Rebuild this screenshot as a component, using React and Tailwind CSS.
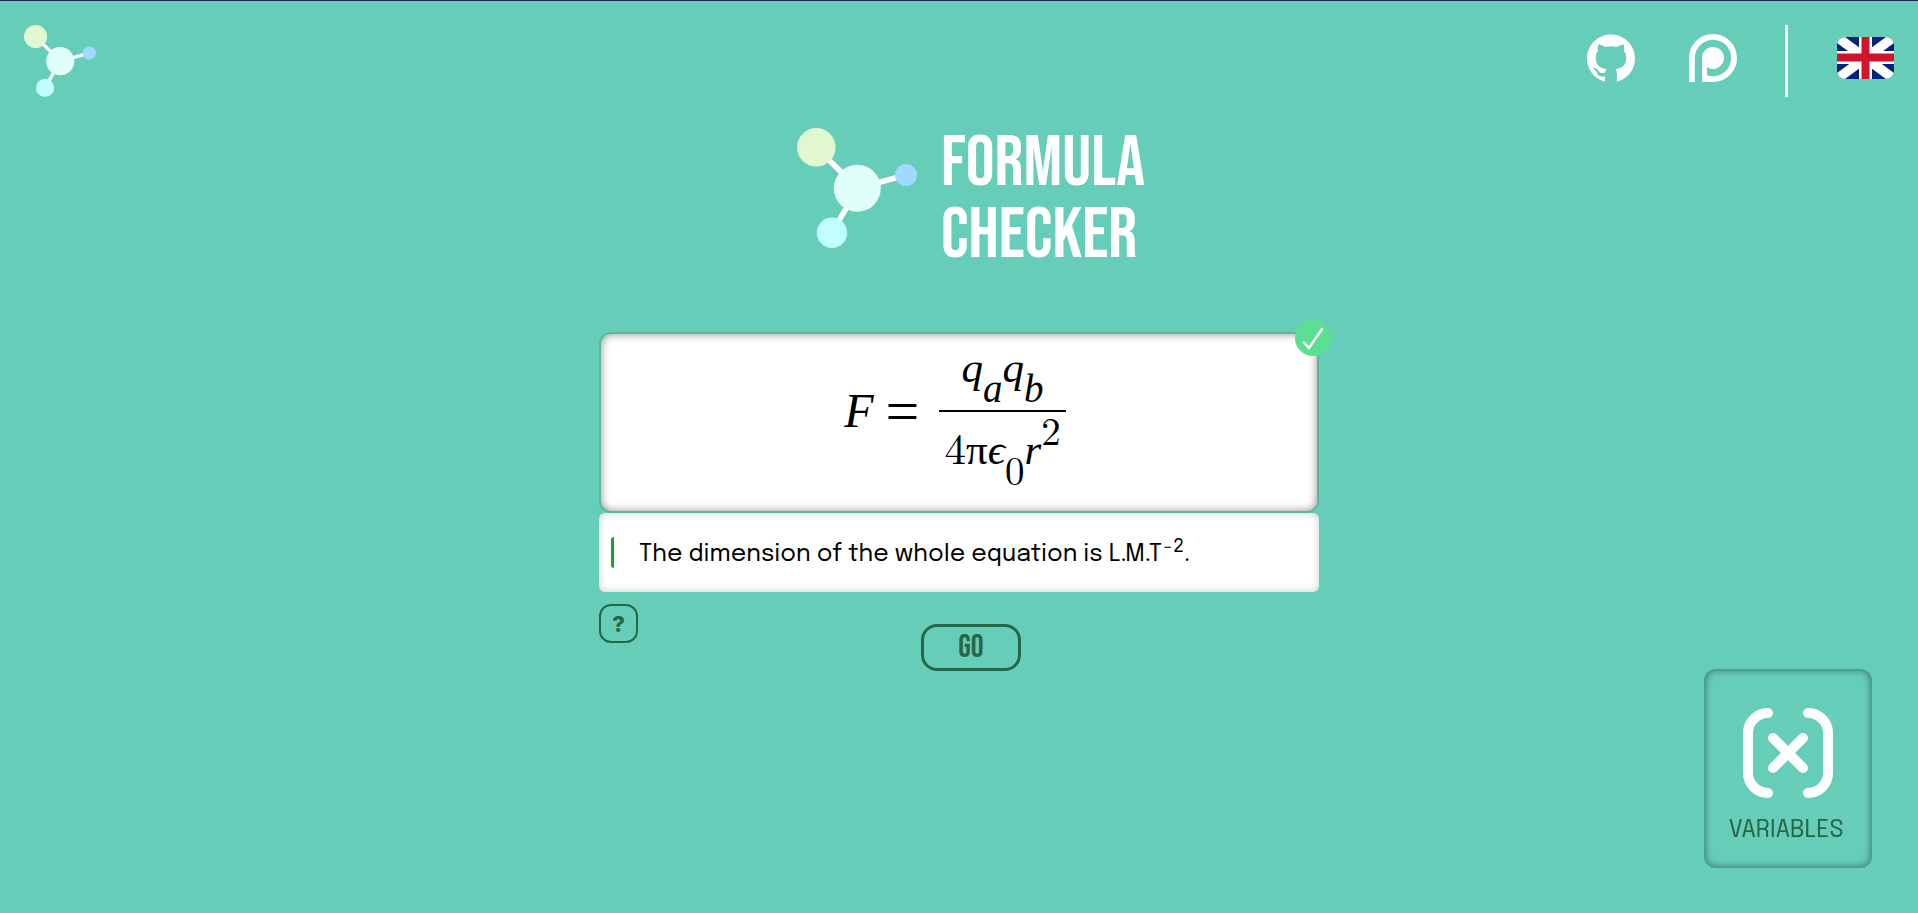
import { SiGithub } from "react-icons/si";

function Molecule({ className }) {
  return (
    <svg viewBox="0 0 120 120" className={className} aria-hidden="true">
      <g stroke="#fff" strokeWidth="5.5">
        <path d="M19.3 19.3 60.3 60.3M109 47 60.3 60.3M35 105 60.3 60.3" />
      </g>
      <circle cx="19.3" cy="19.3" r="19.3" fill="#e1f7d0" />
      <circle cx="60.3" cy="60.3" r="23.5" fill="#e0fff9" />
      <circle cx="109" cy="47" r="11" fill="#a0dafe" />
      <circle cx="35" cy="104.8" r="15.2" fill="#c0feff" />
    </svg>
  );
}

function Patreon() {
  return (
    <svg viewBox="0 0 48 48" className="size-12" fill="#fff" aria-hidden="true">
      <path d="M0 48V24a24 24 0 1 1 24 24H13V24a11 11 0 1 1 5 9.2V41.2A18.2 18.2 0 1 0 5.8 24V48z" />
    </svg>
  );
}

function UkFlag() {
  return (
    <svg viewBox="0 0 57 42" className="h-[42px] w-[57px] rounded-lg" aria-hidden="true">
      <path fill="#00247d" d="M0 0h57v42H0z" />
      <path stroke="#fff" strokeWidth="9.5" d="M0 0l57 42M57 0L0 42" />
      <path stroke="#fff" strokeWidth="13" d="M28.5 0v42M0 20.5h57" />
      <path stroke="#cf142b" strokeWidth="8" d="M28.5 0v42M0 20.5h57" />
    </svg>
  );
}

function VariablesIcon() {
  return (
    <svg
      viewBox="0 0 90 90"
      className="size-[90px]"
      fill="none"
      stroke="#fff"
      strokeWidth="10"
      strokeLinecap="round"
      aria-hidden="true"
    >
      <path d="M25 5A20 20 0 0 0 5 25V65A20 20 0 0 0 25 85M65 5A20 20 0 0 1 85 25V65A20 20 0 0 1 65 85M30 30 60 60M60 30 30 60" />
    </svg>
  );
}

function Header() {
  return (
    <header className="flex items-start justify-between px-6 pt-6">
      <a href="#home" aria-label="Home">
        <Molecule className="size-[72px]" />
      </a>
      <nav className="flex items-start">
        <a href="#github" aria-label="GitHub" className="mt-[9px] mr-[54px]">
          <SiGithub className="size-12 text-white" />
        </a>
        <a href="#patreon" aria-label="Patreon" className="mt-[9px] mr-12">
          <Patreon />
        </a>
        <span className="mr-[49px] h-[72px] w-[3px] bg-white" />
        <button type="button" aria-label="Language: English" className="mt-3">
          <UkFlag />
        </button>
      </nav>
    </header>
  );
}

function Formula() {
  return (
    <div className="flex items-center justify-center pr-2 font-['Liberation_Serif','DejaVu_Serif',serif] text-[48px] leading-[56px] text-black">
      <div className="flex gap-3 pr-5 pb-6">
        <i>F</i>
        <span className="text-[60px]">=</span>
      </div>
      <div className="text-center text-[43px]">
        <div className="border-b-2 border-black px-[5px] pb-[14px]">
          <i>q</i>
          <sub className="static align-[-20px] text-[39px] leading-[0px] italic">a</sub>
          <i>q</i>
          <sub className="static align-[-20px] text-[39px] leading-[0px] italic">b</sub>
        </div>
        <div className="px-[5px] pt-[10px] pb-[27px]">
          <span className="font-['Latin_Modern_Math','Liberation_Serif',serif] leading-[0px]">4</span>π<i>ϵ</i>
          <sub className="static align-[-20px] font-['Latin_Modern_Math','Liberation_Serif',serif] text-[39px] leading-[0px]">0</sub>
          <i>r</i>
          <sup className="static align-[19px] font-['Latin_Modern_Math','Liberation_Serif',serif] text-[39px] leading-[0px]">2</sup>
        </div>
      </div>
    </div>
  );
}

export default function App() {
  return (
    <div className="flex min-h-screen flex-col border-t border-[#1a2b50] bg-[#66cdb8] font-['Epilogue','Inter',sans-serif]">
      <Header />
      <main className="mx-auto flex w-full max-w-[720px] flex-col pt-[31px]">
        <div className="flex justify-center gap-6 pl-6">
          <Molecule className="size-[120px]" />
          <h1 className="font-['Bebas_Neue','Roboto_Condensed',sans-serif] text-[72px] leading-[72px] text-white">
            FORMULA
            <br />
            CHECKER
          </h1>
        </div>

        <section className="relative mt-15 h-[181px] rounded-xl border-2 border-[#5ab899] bg-white pt-[6px] shadow-[inset_0_0_8px_rgba(0,0,0,0.45)]">
          <Formula />
          <svg viewBox="0 0 36 36" className="absolute -top-[14px] -right-[14px] size-9" role="img" aria-label="Valid">
            <circle cx="18" cy="18" r="18" fill="#5adf93" />
            <path d="M9 22.5 14 28 27 9" fill="none" stroke="#fff" strokeWidth="2.5" strokeLinecap="round" />
          </svg>
        </section>

        <section className="flex h-[79px] items-center rounded-md bg-white px-3 shadow-[inset_0_0_8px_rgba(0,0,0,0.2)]">
          <span className="mr-[25px] h-[31px] w-[3px] rounded-l-sm bg-[#17a32f]" />
          <p className="pt-1 text-2xl text-black">
            The dimension of the whole equation is L.M.T<sup className="static align-[9px] text-[19px] leading-[0px]">−2</sup>.
          </p>
        </section>

        <div className="mt-3 grid grid-cols-[1fr_auto_1fr] items-start">
          <button
            type="button"
            aria-label="Help"
            className="size-[39px] rounded-xl border-2 border-[#276749] font-['Inter',sans-serif] text-[22px] leading-8 font-extrabold text-[#276749]"
          >
            ?
          </button>
          <button
            type="button"
            className="mt-5 ml-6 h-[47px] w-[100px] rounded-2xl border-3 border-[#276749] font-['Bebas_Neue','Roboto_Condensed',sans-serif] text-[32px] leading-10 text-[#276749]"
          >
            GO
          </button>
        </div>
      </main>

      <button
        type="button"
        className="fixed right-[46px] bottom-[45px] flex h-[199px] w-[168px] flex-col items-center rounded-xl pt-[39px] text-[#276749] shadow-[inset_0_0_6px_2px_rgba(0,0,0,0.35)]"
      >
        <VariablesIcon />
        <span className="mt-[18px] pr-1 text-2xl leading-[30px]">VARIABLES</span>
      </button>
    </div>
  );
}
